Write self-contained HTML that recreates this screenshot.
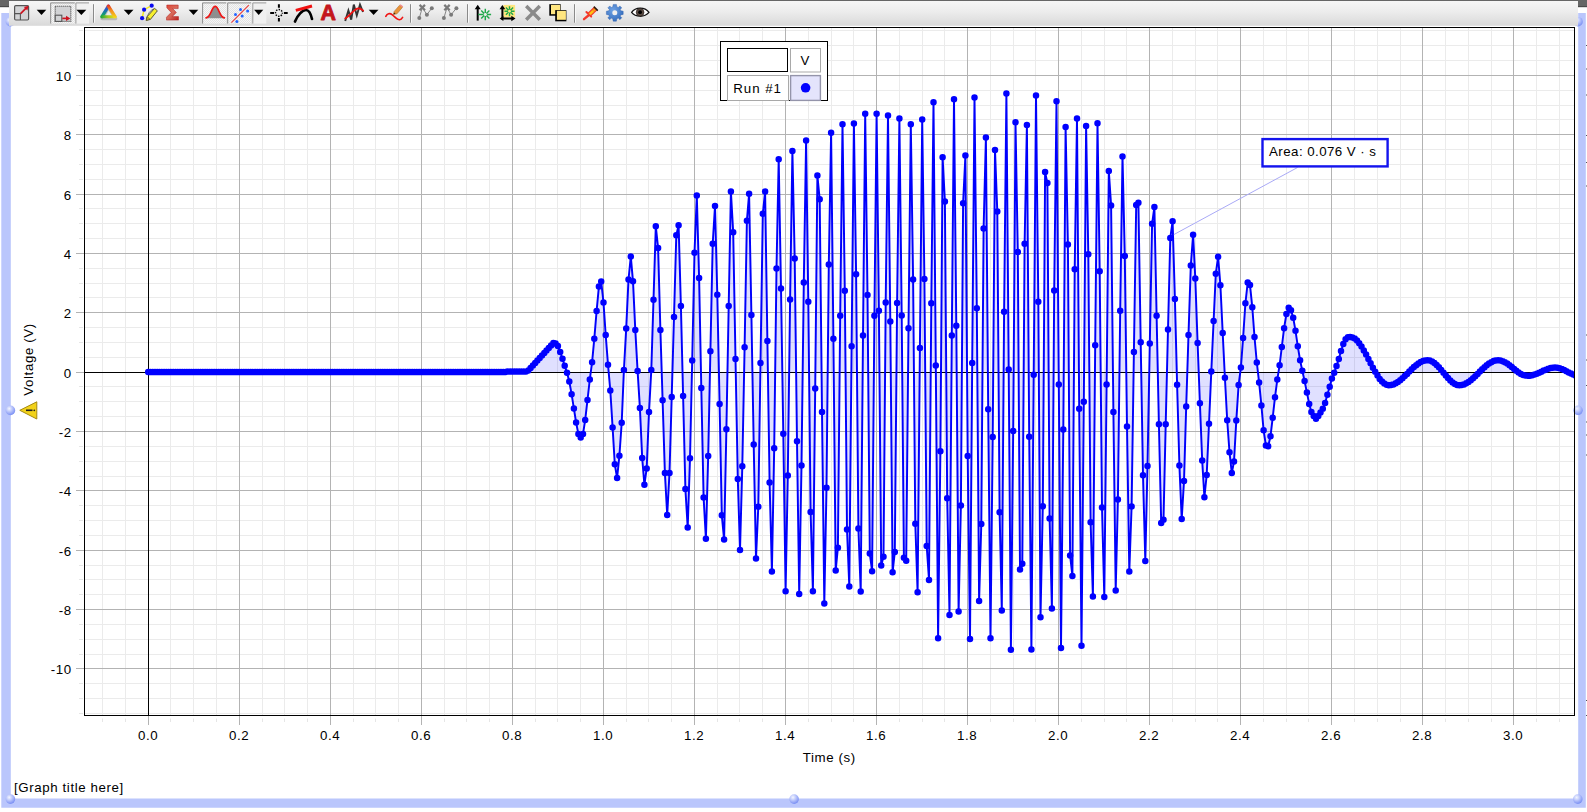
<!DOCTYPE html>
<html><head><meta charset="utf-8"><title>Graph</title>
<style>
html,body{margin:0;padding:0;background:#fff;}
body{width:1587px;height:812px;overflow:hidden;position:relative;font-family:"Liberation Sans",sans-serif;}
svg{position:absolute;left:0;top:0;display:block}
text{font-family:"Liberation Sans",sans-serif;font-size:13.3px;fill:#000;letter-spacing:0.6px}
</style></head><body>
<svg width="1587" height="812" viewBox="0 0 1587 812">
<defs>
<linearGradient id="tb" x1="0" y1="0" x2="0" y2="1"><stop offset="0" stop-color="#f6f6f6"/><stop offset="0.45" stop-color="#ececec"/><stop offset="1" stop-color="#d9d9d9"/></linearGradient>
<radialGradient id="sph" cx="0.38" cy="0.32" r="0.75"><stop offset="0" stop-color="#f4f6ff"/><stop offset="0.45" stop-color="#b7c3fb"/><stop offset="1" stop-color="#6f86f2"/></radialGradient>
<clipPath id="pc"><rect x="85" y="28" width="1489.5" height="687.5"/></clipPath>
</defs>
<rect width="1587" height="812" fill="#fff"/>

<rect x="0" y="0" width="1587" height="6.5" fill="#666"/><rect x="0" y="6" width="1587" height="1.2" fill="#4a4a4a"/>
<path d="M1.3 13H10.8V798.6H1578.2V13H1585.8V807.8H1.3Z" fill="#bac6fc"/>
<circle cx="10.4" cy="21.7" r="4.8" fill="url(#sph)"/>
<circle cx="1578" cy="21.7" r="4.8" fill="url(#sph)"/>
<circle cx="10.4" cy="410.4" r="4.8" fill="url(#sph)"/>
<circle cx="1578" cy="410.3" r="4.8" fill="url(#sph)"/>
<circle cx="10.4" cy="799.1" r="4.8" fill="url(#sph)"/>
<circle cx="794.1" cy="799.1" r="4.8" fill="url(#sph)"/>
<circle cx="1577.8" cy="799.1" r="4.8" fill="url(#sph)"/>
<path d="M1586 45.5H1587M1586 69H1587M1586 95H1587M1586 135.5H1587M1586 162.5H1587M1586 186H1587M1586 335H1587M1586 360H1587M1586 385.5H1587M1586 422H1587M1586 435H1587M1586 455H1587M1586 700.5H1587M1586 715.5H1587" stroke="#555" stroke-width="1"/>
<rect x="9" y="1" width="1569" height="24.8" fill="url(#tb)"/>
<defs>
<pattern id="dotp" width="2" height="2" patternUnits="userSpaceOnUse"><rect width="2" height="2" fill="#f6f6f6"/><rect width="1" height="1" fill="#e2e2e2"/><rect x="1" y="1" width="1" height="1" fill="#e2e2e2"/></pattern>
<linearGradient id="gsig" x1="0" y1="0" x2="1" y2="1"><stop offset="0" stop-color="#e0483a"/><stop offset="0.5" stop-color="#d86a5a"/><stop offset="1" stop-color="#b81c1c"/></linearGradient>
<linearGradient id="gtl" gradientUnits="userSpaceOnUse" x1="0" y1="5" x2="0" y2="18"><stop offset="0" stop-color="#7a3fa0"/><stop offset="0.35" stop-color="#1f62c4"/><stop offset="0.75" stop-color="#13a070"/><stop offset="1" stop-color="#1ea53a"/></linearGradient>
<linearGradient id="gtb" gradientUnits="userSpaceOnUse" x1="101" y1="0" x2="116" y2="0"><stop offset="0" stop-color="#1ea53a"/><stop offset="0.5" stop-color="#a8cc20"/><stop offset="1" stop-color="#f2e21a"/></linearGradient>
<linearGradient id="gtr" gradientUnits="userSpaceOnUse" x1="0" y1="5" x2="0" y2="18"><stop offset="0" stop-color="#e0312a"/><stop offset="0.4" stop-color="#f58a1c"/><stop offset="1" stop-color="#f5d81c"/></linearGradient>
<radialGradient id="ggear" cx="0.4" cy="0.35" r="0.8"><stop offset="0" stop-color="#6fa2e4"/><stop offset="1" stop-color="#2a64b6"/></radialGradient>
</defs>
<g id="toolbar">
<!-- icon1: scale to fit -->
<rect x="14.6" y="5.6" width="14" height="14.4" rx="1.2" fill="#d2d3d5" stroke="#555" stroke-width="1.2"/>
<path d="M14.6 13.6H20.4V20" fill="none" stroke="#555" stroke-width="1.1"/>
<path d="M20.6 13.6L26.6 7.6" stroke="#cc1320" stroke-width="1.7" fill="none"/>
<path d="M28.6 5.7L23.9 7L27.4 10.5Z" fill="#cc1320"/>
<path d="M36.7 9.8H46.3L41.5 15.1Z" fill="#000"/>
<!-- pressed button 2 -->
<rect x="50.2" y="2.4" width="24.6" height="21.2" fill="url(#dotp)"/>
<path d="M50.7 23.6V2.9H74.8" fill="none" stroke="#8c8c8c" stroke-width="1"/>
<rect x="75.4" y="2.4" width="13.6" height="21.2" fill="#f0f0f0"/>
<path d="M75.9 23.6V2.9H89" fill="none" stroke="#9a9a9a" stroke-width="1"/>
<rect x="55.2" y="6.2" width="15.6" height="15.2" fill="#d2d3d5" stroke="#555" stroke-width="1.1" stroke-dasharray="1.2 0.8"/>
<rect x="55.2" y="15.2" width="6.6" height="6.2" fill="#d2d3d5" stroke="#555" stroke-width="1.1"/>
<path d="M62.3 18.4H67" stroke="#cc1320" stroke-width="1.7"/>
<path d="M70.4 18.4L66 15.8V21Z" fill="#cc1320"/>
<path d="M76.4 9.8H86.3L81.35 15.1Z" fill="#000"/>
<path d="M93.5 4.2V22.7" stroke="#8a8a8a" stroke-width="1"/><path d="M94.5 4.2V22.7" stroke="#f8f8f8" stroke-width="1"/>
<!-- colour triangle -->
<g>
<path d="M102 18.6L108.6 7.4L115.6 18.6Z" fill="none" stroke="#888" stroke-opacity="0.45" stroke-width="3.4" stroke-linejoin="round"/>
<path d="M108.4 6.2L102 16.6" stroke="url(#gtl)" stroke-width="3.3" stroke-linecap="round" fill="none"/>
<path d="M102 16.7H115" stroke="url(#gtb)" stroke-width="3.1" stroke-linecap="round" fill="none"/>
<path d="M115 16.6L108.4 6.2" stroke="url(#gtr)" stroke-width="3.3" stroke-linecap="round" fill="none"/>
</g>
<path d="M123.7 9.8H133.5L128.6 15.1Z" fill="#000"/>
<!-- highlighter -->
<g>
<path d="M151.7 5.7L144.1 9.7L142.1 18.2" fill="none" stroke="#f2e61e" stroke-width="1.5"/>
<path d="M153.8 8.6Q148 11.5 146.5 19.6" fill="none" stroke="#777" stroke-width="1"/>
<path d="M154.6 8.4L157.4 10.8L150.4 19.4L146.2 20.4L147.2 16.6Z" fill="#f7f02e" stroke="#4a4a30" stroke-width="0.9" stroke-linejoin="round"/>
<path d="M147.2 16.8L150.2 19.3L146.2 20.4Z" fill="#cbb820" stroke="#4a4a30" stroke-width="0.6"/>
<circle cx="151.7" cy="5.7" r="2.1" fill="#0a0af0"/><circle cx="144.1" cy="9.7" r="2.1" fill="#0a0af0"/><circle cx="142.1" cy="18.2" r="2.1" fill="#0a0af0"/>
</g>
<!-- sigma -->
<path d="M166.8 5H178.2V8.6H172.6L176.4 12.4L172.3 16.6H178.5V20.1H166.5V17.2L171.2 12.4L166.8 7.8Z" fill="url(#gsig)" stroke="#b02020" stroke-width="0.5" stroke-linejoin="round"/>
<path d="M188.7 9.8H198.3L193.5 15.1Z" fill="#000"/>
<!-- pressed bell -->
<rect x="202.1" y="2.4" width="24.2" height="21.2" fill="url(#dotp)"/>
<path d="M202.6 23.6V2.9H226.3" fill="none" stroke="#8c8c8c" stroke-width="1"/>
<path d="M206 18.2C211 17.6 211.6 6.6 215.2 6.6C218.8 6.6 219.4 17.6 224.4 18.2Z" fill="#8e8e8e"/>
<path d="M206 17.9C211 17.3 211.6 6.4 215.2 6.4C218.8 6.4 219.4 17.3 224.4 17.9" fill="none" stroke="#f01414" stroke-width="1.6" stroke-linecap="round"/>
<!-- pressed linear fit -->
<rect x="227.2" y="2.4" width="24" height="21.2" fill="url(#dotp)"/>
<path d="M227.7 23.6V2.9H251.2" fill="none" stroke="#8c8c8c" stroke-width="1"/>
<rect x="252.3" y="2.4" width="14" height="21.2" fill="#f0f0f0"/>
<path d="M252.8 23.6V2.9H266.3" fill="none" stroke="#9a9a9a" stroke-width="1"/>
<g fill="#2464ff"><circle cx="240.5" cy="9.5" r="1.5"/><circle cx="247.6" cy="11" r="1.5"/><circle cx="235.5" cy="14.6" r="1.5"/><circle cx="242.2" cy="16" r="1.5"/><circle cx="236.9" cy="21.4" r="1.5"/></g>
<path d="M231.4 22.6L248.8 5.2" stroke="#f03a3a" stroke-width="1.1"/>
<path d="M254.1 9.8H263.3L258.7 15.1Z" fill="#000"/>
<!-- crosshair -->
<g stroke="#000" fill="none">
<path d="M278.9 4.2V7.8M278.9 18V21.6M270.2 12.9H274M283.9 12.9H287.7" stroke-width="2"/>
<circle cx="278.9" cy="12.9" r="3.4" stroke-width="1.5" stroke-dasharray="1.4 1.27" stroke-dashoffset="0.7"/>
</g>
<!-- tangent -->
<path d="M295 21.6C297.5 15 302.5 10 306 10C309 10 311 14.5 312 19" fill="none" stroke="#000" stroke-width="2.7" stroke-linecap="round"/>
<path d="M295.8 10.4L312 6" stroke="#f01010" stroke-width="3" stroke-linecap="butt"/>
<!-- A -->
<text x="328.3" y="19.9" text-anchor="middle" style="font-size:21.4px;font-weight:bold;fill:#c4161c;letter-spacing:0;stroke:#c4161c;stroke-width:0.9px;stroke-linejoin:round">A</text>
<!-- smoothing -->
<path d="M345.2 21L348.4 10.5L351.2 19.6L353.8 4.6L356.8 15.4L360 4.6L363 12" fill="none" stroke="#333" stroke-width="1.9" stroke-linejoin="miter"/>
<path d="M345.2 18.6C351 15 354 8.4 358.5 8.3C361 8.3 362 9.6 363.2 10.6" fill="none" stroke="#f01010" stroke-width="1.8" stroke-linecap="round"/>
<path d="M368.7 9.8H378.5L373.6 15.1Z" fill="#000"/>
<!-- pencil curve -->
<path d="M385.8 16.4C387.2 13.6 389.8 12.8 392 14.6C395 17 397.2 20 399.6 19.8C401.2 19.6 402 18.4 402.6 17.4" fill="none" stroke="#f01414" stroke-width="1.6" stroke-linecap="round"/>
<g>
<path d="M393.4 14.6L394.2 11.4L399.6 5.2L402.4 7.4L397 13.8Z" fill="#e8943a" stroke="#a8641c" stroke-width="0.5"/>
<path d="M399.6 5.2L400.6 4.2L403.2 6.4L402.4 7.4Z" fill="#f08888"/>
<path d="M393.4 14.6L394 12.4L395.6 13.8Z" fill="#3a2a1a"/>
</g>
<path d="M410.5 4.2V22.7" stroke="#8a8a8a" stroke-width="1"/><path d="M411.5 4.2V22.7" stroke="#f8f8f8" stroke-width="1"/>
<!-- grey x-points 1 -->
<g stroke="#7a7a7a" fill="#7a7a7a">
<path d="M419.3 18L422.3 7.6L426.9 14.7L431.8 8.2" fill="none" stroke-width="0.9"/>
<path d="M419.6 4.9L425 10.3M425 4.9L419.6 10.3" stroke-width="2.2" fill="none"/>
<circle cx="431.8" cy="8.2" r="2" stroke="none"/><circle cx="426.9" cy="14.7" r="2" stroke="none"/><circle cx="419.3" cy="18" r="2" stroke="none"/>
</g>
<g stroke="#7a7a7a" fill="#7a7a7a">
<path d="M443.9 18L447 7.6L451.1 14.7L456.4 8.2" fill="none" stroke-width="0.9"/>
<path d="M444.3 4.9L449.7 10.3M449.7 4.9L444.3 10.3" stroke-width="2.2" fill="none"/>
<circle cx="456.4" cy="8.2" r="2" stroke="none"/><circle cx="451.1" cy="14.7" r="2" stroke="none"/><circle cx="443.9" cy="18" r="2" stroke="none"/>
</g>
<path d="M467.5 4.2V22.7" stroke="#8a8a8a" stroke-width="1"/><path d="M468.5 4.2V22.7" stroke="#f8f8f8" stroke-width="1"/>
<!-- arrow up + star -->
<path d="M477.7 20.6V8" stroke="#000" stroke-width="2"/>
<path d="M477.7 4.8L474.7 9.2H480.7Z" fill="#000"/>
<g stroke="#20a84a" stroke-width="1.45" fill="none" transform="translate(485.3 14.5)">
<path d="M-7 0H-1.6M1.6 0H5.8M0 -5.8V-1.6M0 1.6V5.8M-4.1 -4.1L-1.1 -1.1M1.1 1.1L4.1 4.1M-4.1 4.1L-1.1 1.1M1.1 -1.1L4.1 -4.1"/>
</g>
<!-- axes + star -->
<rect x="503.4" y="4.9" width="11.7" height="12.6" fill="#ffe680"/>
<path d="M502.4 8.5V18.5H512" stroke="#000" stroke-width="2" fill="none"/>
<path d="M502.4 5L499.5 9.2H505.3Z" fill="#000"/><path d="M515.5 18.5L511.3 15.7V21.3Z" fill="#000"/><path d="M499.6 18.5L503.4 16V21Z" fill="#000"/>
<g stroke="#20a84a" stroke-width="1.45" fill="none" transform="translate(509.5 11.2)">
<path d="M-5 0H-1.4M1.4 0H5M0 -5V-1.4M0 1.4V5M-3.6 -3.6L-1 -1M1 1L3.6 3.6M-3.6 3.6L-1 1M1 -1L3.6 -3.6"/>
</g>
<!-- grey X -->
<path d="M526.2 6L539.8 19.8M539.8 6L526.2 19.8" stroke="#8a8a8a" stroke-width="3.4" fill="none"/>
<!-- yellow squares -->
<rect x="549.3" y="4.2" width="11.4" height="11.5" fill="#000"/><rect x="551" y="4.9" width="9.2" height="9.3" fill="#ffe680"/>
<rect x="555.2" y="10.1" width="11.2" height="11.2" fill="#000"/><rect x="556.9" y="10.8" width="9" height="9" fill="#ffe680"/>
<path d="M574.5 4.2V22.7" stroke="#8a8a8a" stroke-width="1"/><path d="M575.5 4.2V22.7" stroke="#f8f8f8" stroke-width="1"/>
<!-- pin -->
<g>
<path d="M589 15L584 19.2" stroke="#f2382c" stroke-width="2.3" stroke-linecap="round"/>
<path d="M586.4 12L591.2 16.6" stroke="#f2382c" stroke-width="2" stroke-linecap="round"/>
<path d="M589.4 14.6L595.4 8.8" stroke="#f23a2c" stroke-width="4.8"/>
<path d="M589.6 14.4L595.4 8.8" stroke="#fb9a14" stroke-width="2.6"/>
<path d="M590 14L593 11.2" stroke="#fdc414" stroke-width="2"/>
<path d="M593.8 6.6L597.8 10.6" stroke="#2a1a12" stroke-width="1.5" stroke-linecap="butt"/>
</g>
<!-- gear -->
<g transform="translate(614.8 12.8)">
<path id="gearp" fill="url(#ggear)" stroke="#2a5ca8" stroke-width="0.4" d="M-1.6 -8.4H1.6L2.1 -5.9L3.6 -5.3L5 -6.9L7 -4.9L5.4 -3.5L6 -2.1L8.4 -1.6V1.6L6 2.1L5.4 3.5L7 4.9L5 6.9L3.6 5.3L2.1 5.9L1.6 8.4H-1.6L-2.1 5.9L-3.6 5.3L-5 6.9L-7 4.9L-5.4 3.5L-6 2.1L-8.4 1.6V-1.6L-6 -2.1L-5.4 -3.5L-7 -4.9L-5 -6.9L-3.6 -5.3L-2.1 -5.9Z"/>
<circle r="2.5" fill="#f0f0f0"/>
</g>
<!-- eye -->
<g>
<path d="M631.6 12.4C635.5 7 644.5 6.6 649 12.4C644.5 17.6 635.5 17.4 631.6 12.4Z" fill="#fff" stroke="#111" stroke-width="1.3" stroke-linejoin="round"/>
<circle cx="640.1" cy="12.3" r="3.9" fill="#5a4a42" stroke="#221a16" stroke-width="0.6"/><circle cx="640.1" cy="12.2" r="1.9" fill="#000"/>
</g>
</g>

<path d="M102.5 27.5V715.5M125.5 27.5V715.5M170.5 27.5V715.5M193.5 27.5V715.5M216.5 27.5V715.5M262.5 27.5V715.5M284.5 27.5V715.5M307.5 27.5V715.5M353.5 27.5V715.5M375.5 27.5V715.5M398.5 27.5V715.5M444.5 27.5V715.5M466.5 27.5V715.5M489.5 27.5V715.5M535.5 27.5V715.5M557.5 27.5V715.5M580.5 27.5V715.5M626.5 27.5V715.5M648.5 27.5V715.5M671.5 27.5V715.5M717.5 27.5V715.5M739.5 27.5V715.5M762.5 27.5V715.5M808.5 27.5V715.5M831.5 27.5V715.5M853.5 27.5V715.5M899.5 27.5V715.5M922.5 27.5V715.5M944.5 27.5V715.5M990.5 27.5V715.5M1013.5 27.5V715.5M1035.5 27.5V715.5M1081.5 27.5V715.5M1104.5 27.5V715.5M1126.5 27.5V715.5M1172.5 27.5V715.5M1195.5 27.5V715.5M1217.5 27.5V715.5M1263.5 27.5V715.5M1286.5 27.5V715.5M1308.5 27.5V715.5M1354.5 27.5V715.5M1377.5 27.5V715.5M1400.5 27.5V715.5M1445.5 27.5V715.5M1468.5 27.5V715.5M1491.5 27.5V715.5M1536.5 27.5V715.5M1559.5 27.5V715.5M84.5 713.5H1574.5M84.5 698.5H1574.5M84.5 683.5H1574.5M84.5 654.5H1574.5M84.5 639.5H1574.5M84.5 624.5H1574.5M84.5 594.5H1574.5M84.5 579.5H1574.5M84.5 565.5H1574.5M84.5 535.5H1574.5M84.5 520.5H1574.5M84.5 505.5H1574.5M84.5 476.5H1574.5M84.5 461.5H1574.5M84.5 446.5H1574.5M84.5 416.5H1574.5M84.5 401.5H1574.5M84.5 386.5H1574.5M84.5 357.5H1574.5M84.5 342.5H1574.5M84.5 327.5H1574.5M84.5 297.5H1574.5M84.5 283.5H1574.5M84.5 268.5H1574.5M84.5 238.5H1574.5M84.5 223.5H1574.5M84.5 208.5H1574.5M84.5 179.5H1574.5M84.5 164.5H1574.5M84.5 149.5H1574.5M84.5 119.5H1574.5M84.5 105.5H1574.5M84.5 90.5H1574.5M84.5 60.5H1574.5M84.5 45.5H1574.5M84.5 30.5H1574.5" stroke="#ebebeb" stroke-width="1" fill="none"/>
<path d="M102.5 718.5V722M125.5 718.5V722M170.5 718.5V722M193.5 718.5V722M216.5 718.5V722M262.5 718.5V722M284.5 718.5V722M307.5 718.5V722M353.5 718.5V722M375.5 718.5V722M398.5 718.5V722M444.5 718.5V722M466.5 718.5V722M489.5 718.5V722M535.5 718.5V722M557.5 718.5V722M580.5 718.5V722M626.5 718.5V722M648.5 718.5V722M671.5 718.5V722M717.5 718.5V722M739.5 718.5V722M762.5 718.5V722M808.5 718.5V722M831.5 718.5V722M853.5 718.5V722M899.5 718.5V722M922.5 718.5V722M944.5 718.5V722M990.5 718.5V722M1013.5 718.5V722M1035.5 718.5V722M1081.5 718.5V722M1104.5 718.5V722M1126.5 718.5V722M1172.5 718.5V722M1195.5 718.5V722M1217.5 718.5V722M1263.5 718.5V722M1286.5 718.5V722M1308.5 718.5V722M1354.5 718.5V722M1377.5 718.5V722M1400.5 718.5V722M1445.5 718.5V722M1468.5 718.5V722M1491.5 718.5V722M1536.5 718.5V722M1559.5 718.5V722M79 713.5H83M79 698.5H83M79 683.5H83M79 654.5H83M79 639.5H83M79 624.5H83M79 594.5H83M79 579.5H83M79 565.5H83M79 535.5H83M79 520.5H83M79 505.5H83M79 476.5H83M79 461.5H83M79 446.5H83M79 416.5H83M79 401.5H83M79 386.5H83M79 357.5H83M79 342.5H83M79 327.5H83M79 297.5H83M79 283.5H83M79 268.5H83M79 238.5H83M79 223.5H83M79 208.5H83M79 179.5H83M79 164.5H83M79 149.5H83M79 119.5H83M79 105.5H83M79 90.5H83M79 60.5H83M79 45.5H83M79 30.5H83" stroke="#e6e6e6" stroke-width="1" fill="none"/>
<path d="M239.5 27.5V725M330.5 27.5V725M421.5 27.5V725M512.5 27.5V725M603.5 27.5V725M694.5 27.5V725M785.5 27.5V725M876.5 27.5V725M967.5 27.5V725M1058.5 27.5V725M1149.5 27.5V725M1240.5 27.5V725M1331.5 27.5V725M1422.5 27.5V725M1513.5 27.5V725M76 668.5H1574.5M76 609.5H1574.5M76 550.5H1574.5M76 490.5H1574.5M76 431.5H1574.5M76 312.5H1574.5M76 253.5H1574.5M76 194.5H1574.5M76 134.5H1574.5M76 75.5H1574.5" stroke="#b3b3b3" stroke-width="1" fill="none"/>
<path d="M148.5 715.5V725M76 372.5H84" stroke="#b3b3b3" stroke-width="1" fill="none"/>
<g clip-path="url(#pc)"><path d="M148.2 372.5L148.2 372.1L150.4 372.1L152.7 372.1L155.0 372.1L157.3 372.1L159.5 372.1L161.8 372.1L164.1 372.1L166.4 372.1L168.6 372.1L170.9 372.1L173.2 372.1L175.5 372.1L177.7 372.1L180.0 372.1L182.3 372.1L184.6 372.1L186.9 372.1L189.1 372.1L191.4 372.1L193.7 372.1L196.0 372.1L198.2 372.1L200.5 372.1L202.8 372.1L205.1 372.1L207.3 372.1L209.6 372.1L211.9 372.1L214.2 372.1L216.4 372.1L218.7 372.1L221.0 372.1L223.3 372.1L225.6 372.1L227.8 372.1L230.1 372.1L232.4 372.1L234.7 372.1L236.9 372.1L239.2 372.1L241.5 372.1L243.8 372.1L246.0 372.1L248.3 372.1L250.6 372.1L252.9 372.1L255.1 372.1L257.4 372.1L259.7 372.1L262.0 372.1L264.3 372.1L266.5 372.1L268.8 372.1L271.1 372.1L273.4 372.1L275.6 372.1L277.9 372.1L280.2 372.1L282.5 372.1L284.7 372.1L287.0 372.1L289.3 372.1L291.6 372.1L293.8 372.1L296.1 372.1L298.4 372.1L300.7 372.1L303.0 372.1L305.2 372.1L307.5 372.1L309.8 372.1L312.1 372.1L314.3 372.1L316.6 372.1L318.9 372.1L321.2 372.1L323.4 372.1L325.7 372.1L328.0 372.1L330.3 372.1L332.5 372.1L334.8 372.1L337.1 372.1L339.4 372.1L341.7 372.1L343.9 372.1L346.2 372.1L348.5 372.1L350.8 372.1L353.0 372.1L355.3 372.1L357.6 372.1L359.9 372.1L362.1 372.1L364.4 372.1L366.7 372.1L369.0 372.1L371.2 372.1L373.5 372.1L375.8 372.1L378.1 372.1L380.4 372.1L382.6 372.1L384.9 372.1L387.2 372.1L389.5 372.1L391.7 372.1L394.0 372.1L396.3 372.1L398.6 372.1L400.8 372.1L403.1 372.1L405.4 372.1L407.7 372.1L409.9 372.1L412.2 372.1L414.5 372.1L416.8 372.1L419.1 372.1L421.3 372.1L423.6 372.1L425.9 372.1L428.2 372.1L430.4 372.1L432.7 372.1L435.0 372.1L437.3 372.1L439.5 372.1L441.8 372.1L444.1 372.1L446.4 372.1L448.6 372.1L450.9 372.1L453.2 372.1L455.5 372.1L457.8 372.1L460.0 372.1L462.3 372.1L464.6 372.1L466.9 372.1L469.1 372.1L471.4 372.1L473.7 372.1L476.0 372.1L478.2 372.1L480.5 372.1L482.8 372.1L485.1 372.1L487.3 372.1L489.6 372.1L491.9 372.1L494.2 372.1L496.5 372.1L498.7 372.1L501.0 372.1L503.3 372.1L505.6 372.1L507.8 371.6L510.1 371.6L512.4 371.6L514.7 371.6L516.9 371.6L519.2 371.6L521.5 371.6L523.8 371.6L526.0 371.6L528.3 370.4L530.6 367.9L532.9 365.4L535.2 362.9L537.4 360.5L539.7 358.0L542.0 355.5L544.3 353.0L546.5 350.5L548.8 348.1L551.1 345.6L553.4 343.1L555.6 343.6L557.9 346.1L560.2 352.0L562.5 358.7L564.7 365.8L567.0 372.7L569.3 381.5L571.6 394.2L573.9 408.6L576.1 422.5L578.4 434.1L580.7 437.4L583.0 434.1L585.2 419.9L587.5 399.9L589.8 379.5L592.1 362.2L594.3 338.7L596.6 311.0L598.9 286.6L601.2 281.5L603.5 302.6L605.7 335.0L608.0 364.7L610.3 390.4L612.6 427.4L614.8 464.3L617.1 478.0L619.4 455.8L621.7 422.8L623.9 370.0L626.2 328.6L628.5 279.5L630.8 256.6L633.0 281.3L635.3 330.1L637.6 371.1L639.9 407.9L642.2 458.1L644.4 484.7L646.7 468.4L649.0 412.1L651.3 370.0L653.5 299.8L655.8 226.3L658.1 248.1L660.4 330.1L662.6 400.3L664.9 473.1L667.2 515.1L669.5 473.0L671.7 397.0L674.0 317.0L676.3 235.3L678.6 225.2L680.9 306.0L683.1 396.1L685.4 489.1L687.7 527.6L690.0 458.3L692.2 360.4L694.5 252.7L696.8 195.6L699.1 277.9L701.3 388.0L703.6 497.4L705.9 538.7L708.2 456.1L710.4 351.2L712.7 243.8L715.0 206.0L717.3 294.7L719.6 404.1L721.8 515.3L724.1 539.6L726.4 429.2L728.7 306.0L730.9 191.6L733.2 232.3L735.5 358.9L737.8 478.9L740.0 550.1L742.3 466.2L744.6 347.3L746.9 220.7L749.1 193.8L751.4 315.1L753.7 444.6L756.0 558.5L758.3 506.7L760.5 363.0L762.8 213.8L765.1 191.5L767.4 340.9L769.6 482.6L771.9 571.4L774.2 448.2L776.5 268.4L778.7 159.2L781.0 288.6L783.3 433.8L785.6 591.3L787.8 475.6L790.1 299.4L792.4 150.9L794.7 258.5L797.0 441.3L799.2 594.1L801.5 465.5L803.8 282.5L806.1 140.5L808.3 301.7L810.6 512.0L812.9 591.3L815.2 388.5L817.4 175.5L819.7 199.3L822.0 411.9L824.3 603.6L826.5 487.8L828.8 264.5L831.1 132.7L833.4 338.8L835.7 570.5L837.9 547.7L840.2 315.8L842.5 124.2L844.8 290.8L847.0 529.5L849.3 586.6L851.6 346.2L853.9 123.5L856.1 274.3L858.4 528.4L860.7 591.5L863.0 335.6L865.2 113.8L867.5 295.1L869.8 553.5L872.1 571.2L874.4 315.8L876.6 113.8L878.9 310.8L881.2 565.6L883.5 556.8L885.7 302.4L888.0 115.5L890.3 321.5L892.6 572.2L894.8 552.1L897.1 303.0L899.4 118.6L901.7 315.4L903.9 557.7L906.2 560.7L908.5 328.2L910.8 124.2L913.1 279.6L915.3 523.7L917.6 592.2L919.9 348.1L922.2 119.5L924.4 278.9L926.7 545.9L929.0 579.9L931.3 303.3L933.5 102.3L935.8 365.6L938.1 638.2L940.4 451.2L942.6 157.3L944.9 201.4L947.2 498.3L949.5 615.1L951.8 335.6L954.0 99.3L956.3 325.8L958.6 611.5L960.9 505.5L963.1 203.2L965.4 155.6L967.7 456.1L970.0 638.9L972.2 362.9L974.5 97.6L976.8 308.2L979.1 600.9L981.3 523.9L983.6 228.6L985.9 137.5L988.2 409.2L990.5 638.2L992.7 437.1L995.0 149.9L997.3 211.6L999.6 512.2L1001.8 610.4L1004.1 311.8L1006.4 93.6L1008.7 369.5L1010.9 649.7L1013.2 431.0L1015.5 122.2L1017.8 251.9L1020.0 569.5L1022.3 563.7L1024.6 243.7L1026.9 125.0L1029.2 436.8L1031.4 649.5L1033.7 374.8L1036.0 95.5L1038.3 301.8L1040.5 617.3L1042.8 506.3L1045.1 172.1L1047.4 183.1L1049.6 518.6L1051.9 608.6L1054.2 290.4L1056.5 101.3L1058.8 384.6L1061.0 648.1L1063.3 429.6L1065.6 127.1L1067.9 244.5L1070.1 555.5L1072.4 576.0L1074.7 269.3L1077.0 118.6L1079.2 408.8L1081.5 645.7L1083.8 401.7L1086.1 126.1L1088.3 254.2L1090.6 522.2L1092.9 596.6L1095.2 345.3L1097.5 123.3L1099.7 271.3L1102.0 507.5L1104.3 596.9L1106.6 384.6L1108.8 170.9L1111.1 205.4L1113.4 412.1L1115.7 590.4L1117.9 499.5L1120.2 310.8L1122.5 156.6L1124.8 256.1L1127.0 426.5L1129.3 571.4L1131.6 506.4L1133.9 352.1L1136.2 204.9L1138.4 202.7L1140.7 342.2L1143.0 475.3L1145.3 560.9L1147.5 465.9L1149.8 343.4L1152.1 223.8L1154.4 207.0L1156.6 315.8L1158.9 424.3L1161.2 522.9L1163.5 519.8L1165.7 424.3L1168.0 329.5L1170.3 237.9L1172.6 221.3L1174.9 298.9L1177.1 384.7L1179.4 465.4L1181.7 519.1L1184.0 481.1L1186.2 406.5L1188.5 334.9L1190.8 265.6L1193.1 234.8L1195.3 278.5L1197.6 343.0L1199.9 403.3L1202.2 460.6L1204.4 497.2L1206.7 475.0L1209.0 423.8L1211.3 371.5L1213.6 321.0L1215.8 273.7L1218.1 256.8L1220.4 285.2L1222.7 333.0L1224.9 377.7L1227.2 420.3L1229.5 452.2L1231.8 473.1L1234.0 461.5L1236.3 420.6L1238.6 385.0L1240.9 367.4L1243.1 337.9L1245.4 303.3L1247.7 282.5L1250.0 285.1L1252.3 307.3L1254.5 337.0L1256.8 362.5L1259.1 382.4L1261.4 405.4L1263.6 430.3L1265.9 445.5L1268.2 446.3L1270.5 436.2L1272.7 417.7L1275.0 397.2L1277.3 379.6L1279.6 365.2L1281.8 347.0L1284.1 328.2L1286.4 314.0L1288.7 307.8L1291.0 310.2L1293.2 317.7L1295.5 330.8L1297.8 346.3L1300.1 360.3L1302.3 370.7L1304.6 381.0L1306.9 392.6L1309.2 403.9L1311.4 412.1L1313.7 416.1L1316.0 418.7L1318.3 416.1L1320.5 412.5L1322.8 408.8L1325.1 402.9L1327.4 394.8L1329.7 386.7L1331.9 378.6L1334.2 372.7L1336.5 366.0L1338.8 358.9L1341.0 351.0L1343.3 344.1L1345.6 339.2L1347.9 337.2L1350.1 337.0L1352.4 337.4L1354.7 338.6L1357.0 340.6L1359.2 343.3L1361.5 346.6L1363.8 350.4L1366.1 354.5L1368.4 358.9L1370.6 363.3L1372.9 367.7L1375.2 371.8L1377.5 375.6L1379.7 378.9L1382.0 381.6L1384.3 383.6L1386.6 384.8L1388.8 385.2L1391.1 385.0L1393.4 384.4L1395.7 383.3L1397.9 381.9L1400.2 380.2L1402.5 378.3L1404.8 376.1L1407.1 373.9L1409.3 371.5L1411.6 369.3L1413.9 367.1L1416.2 365.2L1418.4 363.5L1420.7 362.1L1423.0 361.0L1425.3 360.4L1427.5 360.2L1429.8 360.5L1432.1 361.4L1434.4 362.9L1436.6 364.9L1438.9 367.3L1441.2 369.9L1443.5 372.7L1445.8 375.5L1448.0 378.1L1450.3 380.5L1452.6 382.5L1454.9 384.0L1457.1 384.9L1459.4 385.2L1461.7 385.0L1464.0 384.4L1466.2 383.3L1468.5 382.0L1470.8 380.3L1473.1 378.3L1475.3 376.2L1477.6 373.9L1479.9 371.6L1482.2 369.3L1484.5 367.2L1486.7 365.2L1489.0 363.5L1491.3 362.2L1493.6 361.1L1495.8 360.5L1498.1 360.3L1500.4 360.5L1502.7 361.2L1504.9 362.2L1507.2 363.6L1509.5 365.3L1511.8 367.1L1514.1 369.0L1516.3 370.8L1518.6 372.5L1520.9 373.9L1523.2 374.9L1525.4 375.6L1527.7 375.8L1530.0 375.7L1532.3 375.3L1534.5 374.6L1536.8 373.8L1539.1 372.8L1541.4 371.7L1543.6 370.6L1545.9 369.7L1548.2 368.8L1550.5 368.1L1552.8 367.7L1555.0 367.6L1557.3 367.8L1559.6 368.3L1561.9 369.1L1564.1 370.1L1566.4 371.2L1568.7 372.4L1571.0 373.6L1573.2 374.6L1575.5 375.4L1575.5 372.5Z" fill="#0000ff" fill-opacity="0.12" stroke="none"/>
<path d="M148.5 27.5V715.5M84.5 372.5H1574.5" stroke="#000" stroke-width="1" fill="none"/>
<path d="M148.2 372.1L150.4 372.1L152.7 372.1L155.0 372.1L157.3 372.1L159.5 372.1L161.8 372.1L164.1 372.1L166.4 372.1L168.6 372.1L170.9 372.1L173.2 372.1L175.5 372.1L177.7 372.1L180.0 372.1L182.3 372.1L184.6 372.1L186.9 372.1L189.1 372.1L191.4 372.1L193.7 372.1L196.0 372.1L198.2 372.1L200.5 372.1L202.8 372.1L205.1 372.1L207.3 372.1L209.6 372.1L211.9 372.1L214.2 372.1L216.4 372.1L218.7 372.1L221.0 372.1L223.3 372.1L225.6 372.1L227.8 372.1L230.1 372.1L232.4 372.1L234.7 372.1L236.9 372.1L239.2 372.1L241.5 372.1L243.8 372.1L246.0 372.1L248.3 372.1L250.6 372.1L252.9 372.1L255.1 372.1L257.4 372.1L259.7 372.1L262.0 372.1L264.3 372.1L266.5 372.1L268.8 372.1L271.1 372.1L273.4 372.1L275.6 372.1L277.9 372.1L280.2 372.1L282.5 372.1L284.7 372.1L287.0 372.1L289.3 372.1L291.6 372.1L293.8 372.1L296.1 372.1L298.4 372.1L300.7 372.1L303.0 372.1L305.2 372.1L307.5 372.1L309.8 372.1L312.1 372.1L314.3 372.1L316.6 372.1L318.9 372.1L321.2 372.1L323.4 372.1L325.7 372.1L328.0 372.1L330.3 372.1L332.5 372.1L334.8 372.1L337.1 372.1L339.4 372.1L341.7 372.1L343.9 372.1L346.2 372.1L348.5 372.1L350.8 372.1L353.0 372.1L355.3 372.1L357.6 372.1L359.9 372.1L362.1 372.1L364.4 372.1L366.7 372.1L369.0 372.1L371.2 372.1L373.5 372.1L375.8 372.1L378.1 372.1L380.4 372.1L382.6 372.1L384.9 372.1L387.2 372.1L389.5 372.1L391.7 372.1L394.0 372.1L396.3 372.1L398.6 372.1L400.8 372.1L403.1 372.1L405.4 372.1L407.7 372.1L409.9 372.1L412.2 372.1L414.5 372.1L416.8 372.1L419.1 372.1L421.3 372.1L423.6 372.1L425.9 372.1L428.2 372.1L430.4 372.1L432.7 372.1L435.0 372.1L437.3 372.1L439.5 372.1L441.8 372.1L444.1 372.1L446.4 372.1L448.6 372.1L450.9 372.1L453.2 372.1L455.5 372.1L457.8 372.1L460.0 372.1L462.3 372.1L464.6 372.1L466.9 372.1L469.1 372.1L471.4 372.1L473.7 372.1L476.0 372.1L478.2 372.1L480.5 372.1L482.8 372.1L485.1 372.1L487.3 372.1L489.6 372.1L491.9 372.1L494.2 372.1L496.5 372.1L498.7 372.1L501.0 372.1L503.3 372.1L505.6 372.1L507.8 371.6L510.1 371.6L512.4 371.6L514.7 371.6L516.9 371.6L519.2 371.6L521.5 371.6L523.8 371.6L526.0 371.6L528.3 370.4L530.6 367.9L532.9 365.4L535.2 362.9L537.4 360.5L539.7 358.0L542.0 355.5L544.3 353.0L546.5 350.5L548.8 348.1L551.1 345.6L553.4 343.1L555.6 343.6L557.9 346.1L560.2 352.0L562.5 358.7L564.7 365.8L567.0 372.7L569.3 381.5L571.6 394.2L573.9 408.6L576.1 422.5L578.4 434.1L580.7 437.4L583.0 434.1L585.2 419.9L587.5 399.9L589.8 379.5L592.1 362.2L594.3 338.7L596.6 311.0L598.9 286.6L601.2 281.5L603.5 302.6L605.7 335.0L608.0 364.7L610.3 390.4L612.6 427.4L614.8 464.3L617.1 478.0L619.4 455.8L621.7 422.8L623.9 370.0L626.2 328.6L628.5 279.5L630.8 256.6L633.0 281.3L635.3 330.1L637.6 371.1L639.9 407.9L642.2 458.1L644.4 484.7L646.7 468.4L649.0 412.1L651.3 370.0L653.5 299.8L655.8 226.3L658.1 248.1L660.4 330.1L662.6 400.3L664.9 473.1L667.2 515.1L669.5 473.0L671.7 397.0L674.0 317.0L676.3 235.3L678.6 225.2L680.9 306.0L683.1 396.1L685.4 489.1L687.7 527.6L690.0 458.3L692.2 360.4L694.5 252.7L696.8 195.6L699.1 277.9L701.3 388.0L703.6 497.4L705.9 538.7L708.2 456.1L710.4 351.2L712.7 243.8L715.0 206.0L717.3 294.7L719.6 404.1L721.8 515.3L724.1 539.6L726.4 429.2L728.7 306.0L730.9 191.6L733.2 232.3L735.5 358.9L737.8 478.9L740.0 550.1L742.3 466.2L744.6 347.3L746.9 220.7L749.1 193.8L751.4 315.1L753.7 444.6L756.0 558.5L758.3 506.7L760.5 363.0L762.8 213.8L765.1 191.5L767.4 340.9L769.6 482.6L771.9 571.4L774.2 448.2L776.5 268.4L778.7 159.2L781.0 288.6L783.3 433.8L785.6 591.3L787.8 475.6L790.1 299.4L792.4 150.9L794.7 258.5L797.0 441.3L799.2 594.1L801.5 465.5L803.8 282.5L806.1 140.5L808.3 301.7L810.6 512.0L812.9 591.3L815.2 388.5L817.4 175.5L819.7 199.3L822.0 411.9L824.3 603.6L826.5 487.8L828.8 264.5L831.1 132.7L833.4 338.8L835.7 570.5L837.9 547.7L840.2 315.8L842.5 124.2L844.8 290.8L847.0 529.5L849.3 586.6L851.6 346.2L853.9 123.5L856.1 274.3L858.4 528.4L860.7 591.5L863.0 335.6L865.2 113.8L867.5 295.1L869.8 553.5L872.1 571.2L874.4 315.8L876.6 113.8L878.9 310.8L881.2 565.6L883.5 556.8L885.7 302.4L888.0 115.5L890.3 321.5L892.6 572.2L894.8 552.1L897.1 303.0L899.4 118.6L901.7 315.4L903.9 557.7L906.2 560.7L908.5 328.2L910.8 124.2L913.1 279.6L915.3 523.7L917.6 592.2L919.9 348.1L922.2 119.5L924.4 278.9L926.7 545.9L929.0 579.9L931.3 303.3L933.5 102.3L935.8 365.6L938.1 638.2L940.4 451.2L942.6 157.3L944.9 201.4L947.2 498.3L949.5 615.1L951.8 335.6L954.0 99.3L956.3 325.8L958.6 611.5L960.9 505.5L963.1 203.2L965.4 155.6L967.7 456.1L970.0 638.9L972.2 362.9L974.5 97.6L976.8 308.2L979.1 600.9L981.3 523.9L983.6 228.6L985.9 137.5L988.2 409.2L990.5 638.2L992.7 437.1L995.0 149.9L997.3 211.6L999.6 512.2L1001.8 610.4L1004.1 311.8L1006.4 93.6L1008.7 369.5L1010.9 649.7L1013.2 431.0L1015.5 122.2L1017.8 251.9L1020.0 569.5L1022.3 563.7L1024.6 243.7L1026.9 125.0L1029.2 436.8L1031.4 649.5L1033.7 374.8L1036.0 95.5L1038.3 301.8L1040.5 617.3L1042.8 506.3L1045.1 172.1L1047.4 183.1L1049.6 518.6L1051.9 608.6L1054.2 290.4L1056.5 101.3L1058.8 384.6L1061.0 648.1L1063.3 429.6L1065.6 127.1L1067.9 244.5L1070.1 555.5L1072.4 576.0L1074.7 269.3L1077.0 118.6L1079.2 408.8L1081.5 645.7L1083.8 401.7L1086.1 126.1L1088.3 254.2L1090.6 522.2L1092.9 596.6L1095.2 345.3L1097.5 123.3L1099.7 271.3L1102.0 507.5L1104.3 596.9L1106.6 384.6L1108.8 170.9L1111.1 205.4L1113.4 412.1L1115.7 590.4L1117.9 499.5L1120.2 310.8L1122.5 156.6L1124.8 256.1L1127.0 426.5L1129.3 571.4L1131.6 506.4L1133.9 352.1L1136.2 204.9L1138.4 202.7L1140.7 342.2L1143.0 475.3L1145.3 560.9L1147.5 465.9L1149.8 343.4L1152.1 223.8L1154.4 207.0L1156.6 315.8L1158.9 424.3L1161.2 522.9L1163.5 519.8L1165.7 424.3L1168.0 329.5L1170.3 237.9L1172.6 221.3L1174.9 298.9L1177.1 384.7L1179.4 465.4L1181.7 519.1L1184.0 481.1L1186.2 406.5L1188.5 334.9L1190.8 265.6L1193.1 234.8L1195.3 278.5L1197.6 343.0L1199.9 403.3L1202.2 460.6L1204.4 497.2L1206.7 475.0L1209.0 423.8L1211.3 371.5L1213.6 321.0L1215.8 273.7L1218.1 256.8L1220.4 285.2L1222.7 333.0L1224.9 377.7L1227.2 420.3L1229.5 452.2L1231.8 473.1L1234.0 461.5L1236.3 420.6L1238.6 385.0L1240.9 367.4L1243.1 337.9L1245.4 303.3L1247.7 282.5L1250.0 285.1L1252.3 307.3L1254.5 337.0L1256.8 362.5L1259.1 382.4L1261.4 405.4L1263.6 430.3L1265.9 445.5L1268.2 446.3L1270.5 436.2L1272.7 417.7L1275.0 397.2L1277.3 379.6L1279.6 365.2L1281.8 347.0L1284.1 328.2L1286.4 314.0L1288.7 307.8L1291.0 310.2L1293.2 317.7L1295.5 330.8L1297.8 346.3L1300.1 360.3L1302.3 370.7L1304.6 381.0L1306.9 392.6L1309.2 403.9L1311.4 412.1L1313.7 416.1L1316.0 418.7L1318.3 416.1L1320.5 412.5L1322.8 408.8L1325.1 402.9L1327.4 394.8L1329.7 386.7L1331.9 378.6L1334.2 372.7L1336.5 366.0L1338.8 358.9L1341.0 351.0L1343.3 344.1L1345.6 339.2L1347.9 337.2L1350.1 337.0L1352.4 337.4L1354.7 338.6L1357.0 340.6L1359.2 343.3L1361.5 346.6L1363.8 350.4L1366.1 354.5L1368.4 358.9L1370.6 363.3L1372.9 367.7L1375.2 371.8L1377.5 375.6L1379.7 378.9L1382.0 381.6L1384.3 383.6L1386.6 384.8L1388.8 385.2L1391.1 385.0L1393.4 384.4L1395.7 383.3L1397.9 381.9L1400.2 380.2L1402.5 378.3L1404.8 376.1L1407.1 373.9L1409.3 371.5L1411.6 369.3L1413.9 367.1L1416.2 365.2L1418.4 363.5L1420.7 362.1L1423.0 361.0L1425.3 360.4L1427.5 360.2L1429.8 360.5L1432.1 361.4L1434.4 362.9L1436.6 364.9L1438.9 367.3L1441.2 369.9L1443.5 372.7L1445.8 375.5L1448.0 378.1L1450.3 380.5L1452.6 382.5L1454.9 384.0L1457.1 384.9L1459.4 385.2L1461.7 385.0L1464.0 384.4L1466.2 383.3L1468.5 382.0L1470.8 380.3L1473.1 378.3L1475.3 376.2L1477.6 373.9L1479.9 371.6L1482.2 369.3L1484.5 367.2L1486.7 365.2L1489.0 363.5L1491.3 362.2L1493.6 361.1L1495.8 360.5L1498.1 360.3L1500.4 360.5L1502.7 361.2L1504.9 362.2L1507.2 363.6L1509.5 365.3L1511.8 367.1L1514.1 369.0L1516.3 370.8L1518.6 372.5L1520.9 373.9L1523.2 374.9L1525.4 375.6L1527.7 375.8L1530.0 375.7L1532.3 375.3L1534.5 374.6L1536.8 373.8L1539.1 372.8L1541.4 371.7L1543.6 370.6L1545.9 369.7L1548.2 368.8L1550.5 368.1L1552.8 367.7L1555.0 367.6L1557.3 367.8L1559.6 368.3L1561.9 369.1L1564.1 370.1L1566.4 371.2L1568.7 372.4L1571.0 373.6L1573.2 374.6L1575.5 375.4" fill="none" stroke="#0000fc" stroke-width="1.95" stroke-linejoin="round"/>
<path d="M148.2 372.1h0M150.4 372.1h0M152.7 372.1h0M155.0 372.1h0M157.3 372.1h0M159.5 372.1h0M161.8 372.1h0M164.1 372.1h0M166.4 372.1h0M168.6 372.1h0M170.9 372.1h0M173.2 372.1h0M175.5 372.1h0M177.7 372.1h0M180.0 372.1h0M182.3 372.1h0M184.6 372.1h0M186.9 372.1h0M189.1 372.1h0M191.4 372.1h0M193.7 372.1h0M196.0 372.1h0M198.2 372.1h0M200.5 372.1h0M202.8 372.1h0M205.1 372.1h0M207.3 372.1h0M209.6 372.1h0M211.9 372.1h0M214.2 372.1h0M216.4 372.1h0M218.7 372.1h0M221.0 372.1h0M223.3 372.1h0M225.6 372.1h0M227.8 372.1h0M230.1 372.1h0M232.4 372.1h0M234.7 372.1h0M236.9 372.1h0M239.2 372.1h0M241.5 372.1h0M243.8 372.1h0M246.0 372.1h0M248.3 372.1h0M250.6 372.1h0M252.9 372.1h0M255.1 372.1h0M257.4 372.1h0M259.7 372.1h0M262.0 372.1h0M264.3 372.1h0M266.5 372.1h0M268.8 372.1h0M271.1 372.1h0M273.4 372.1h0M275.6 372.1h0M277.9 372.1h0M280.2 372.1h0M282.5 372.1h0M284.7 372.1h0M287.0 372.1h0M289.3 372.1h0M291.6 372.1h0M293.8 372.1h0M296.1 372.1h0M298.4 372.1h0M300.7 372.1h0M303.0 372.1h0M305.2 372.1h0M307.5 372.1h0M309.8 372.1h0M312.1 372.1h0M314.3 372.1h0M316.6 372.1h0M318.9 372.1h0M321.2 372.1h0M323.4 372.1h0M325.7 372.1h0M328.0 372.1h0M330.3 372.1h0M332.5 372.1h0M334.8 372.1h0M337.1 372.1h0M339.4 372.1h0M341.7 372.1h0M343.9 372.1h0M346.2 372.1h0M348.5 372.1h0M350.8 372.1h0M353.0 372.1h0M355.3 372.1h0M357.6 372.1h0M359.9 372.1h0M362.1 372.1h0M364.4 372.1h0M366.7 372.1h0M369.0 372.1h0M371.2 372.1h0M373.5 372.1h0M375.8 372.1h0M378.1 372.1h0M380.4 372.1h0M382.6 372.1h0M384.9 372.1h0M387.2 372.1h0M389.5 372.1h0M391.7 372.1h0M394.0 372.1h0M396.3 372.1h0M398.6 372.1h0M400.8 372.1h0M403.1 372.1h0M405.4 372.1h0M407.7 372.1h0M409.9 372.1h0M412.2 372.1h0M414.5 372.1h0M416.8 372.1h0M419.1 372.1h0M421.3 372.1h0M423.6 372.1h0M425.9 372.1h0M428.2 372.1h0M430.4 372.1h0M432.7 372.1h0M435.0 372.1h0M437.3 372.1h0M439.5 372.1h0M441.8 372.1h0M444.1 372.1h0M446.4 372.1h0M448.6 372.1h0M450.9 372.1h0M453.2 372.1h0M455.5 372.1h0M457.8 372.1h0M460.0 372.1h0M462.3 372.1h0M464.6 372.1h0M466.9 372.1h0M469.1 372.1h0M471.4 372.1h0M473.7 372.1h0M476.0 372.1h0M478.2 372.1h0M480.5 372.1h0M482.8 372.1h0M485.1 372.1h0M487.3 372.1h0M489.6 372.1h0M491.9 372.1h0M494.2 372.1h0M496.5 372.1h0M498.7 372.1h0M501.0 372.1h0M503.3 372.1h0M505.6 372.1h0M507.8 371.6h0M510.1 371.6h0M512.4 371.6h0M514.7 371.6h0M516.9 371.6h0M519.2 371.6h0M521.5 371.6h0M523.8 371.6h0M526.0 371.6h0M528.3 370.4h0M530.6 367.9h0M532.9 365.4h0M535.2 362.9h0M537.4 360.5h0M539.7 358.0h0M542.0 355.5h0M544.3 353.0h0M546.5 350.5h0M548.8 348.1h0M551.1 345.6h0M553.4 343.1h0M555.6 343.6h0M557.9 346.1h0M560.2 352.0h0M562.5 358.7h0M564.7 365.8h0M567.0 372.7h0M569.3 381.5h0M571.6 394.2h0M573.9 408.6h0M576.1 422.5h0M578.4 434.1h0M580.7 437.4h0M583.0 434.1h0M585.2 419.9h0M587.5 399.9h0M589.8 379.5h0M592.1 362.2h0M594.3 338.7h0M596.6 311.0h0M598.9 286.6h0M601.2 281.5h0M603.5 302.6h0M605.7 335.0h0M608.0 364.7h0M610.3 390.4h0M612.6 427.4h0M614.8 464.3h0M617.1 478.0h0M619.4 455.8h0M621.7 422.8h0M623.9 370.0h0M626.2 328.6h0M628.5 279.5h0M630.8 256.6h0M633.0 281.3h0M635.3 330.1h0M637.6 371.1h0M639.9 407.9h0M642.2 458.1h0M644.4 484.7h0M646.7 468.4h0M649.0 412.1h0M651.3 370.0h0M653.5 299.8h0M655.8 226.3h0M658.1 248.1h0M660.4 330.1h0M662.6 400.3h0M664.9 473.1h0M667.2 515.1h0M669.5 473.0h0M671.7 397.0h0M674.0 317.0h0M676.3 235.3h0M678.6 225.2h0M680.9 306.0h0M683.1 396.1h0M685.4 489.1h0M687.7 527.6h0M690.0 458.3h0M692.2 360.4h0M694.5 252.7h0M696.8 195.6h0M699.1 277.9h0M701.3 388.0h0M703.6 497.4h0M705.9 538.7h0M708.2 456.1h0M710.4 351.2h0M712.7 243.8h0M715.0 206.0h0M717.3 294.7h0M719.6 404.1h0M721.8 515.3h0M724.1 539.6h0M726.4 429.2h0M728.7 306.0h0M730.9 191.6h0M733.2 232.3h0M735.5 358.9h0M737.8 478.9h0M740.0 550.1h0M742.3 466.2h0M744.6 347.3h0M746.9 220.7h0M749.1 193.8h0M751.4 315.1h0M753.7 444.6h0M756.0 558.5h0M758.3 506.7h0M760.5 363.0h0M762.8 213.8h0M765.1 191.5h0M767.4 340.9h0M769.6 482.6h0M771.9 571.4h0M774.2 448.2h0M776.5 268.4h0M778.7 159.2h0M781.0 288.6h0M783.3 433.8h0M785.6 591.3h0M787.8 475.6h0M790.1 299.4h0M792.4 150.9h0M794.7 258.5h0M797.0 441.3h0M799.2 594.1h0M801.5 465.5h0M803.8 282.5h0M806.1 140.5h0M808.3 301.7h0M810.6 512.0h0M812.9 591.3h0M815.2 388.5h0M817.4 175.5h0M819.7 199.3h0M822.0 411.9h0M824.3 603.6h0M826.5 487.8h0M828.8 264.5h0M831.1 132.7h0M833.4 338.8h0M835.7 570.5h0M837.9 547.7h0M840.2 315.8h0M842.5 124.2h0M844.8 290.8h0M847.0 529.5h0M849.3 586.6h0M851.6 346.2h0M853.9 123.5h0M856.1 274.3h0M858.4 528.4h0M860.7 591.5h0M863.0 335.6h0M865.2 113.8h0M867.5 295.1h0M869.8 553.5h0M872.1 571.2h0M874.4 315.8h0M876.6 113.8h0M878.9 310.8h0M881.2 565.6h0M883.5 556.8h0M885.7 302.4h0M888.0 115.5h0M890.3 321.5h0M892.6 572.2h0M894.8 552.1h0M897.1 303.0h0M899.4 118.6h0M901.7 315.4h0M903.9 557.7h0M906.2 560.7h0M908.5 328.2h0M910.8 124.2h0M913.1 279.6h0M915.3 523.7h0M917.6 592.2h0M919.9 348.1h0M922.2 119.5h0M924.4 278.9h0M926.7 545.9h0M929.0 579.9h0M931.3 303.3h0M933.5 102.3h0M935.8 365.6h0M938.1 638.2h0M940.4 451.2h0M942.6 157.3h0M944.9 201.4h0M947.2 498.3h0M949.5 615.1h0M951.8 335.6h0M954.0 99.3h0M956.3 325.8h0M958.6 611.5h0M960.9 505.5h0M963.1 203.2h0M965.4 155.6h0M967.7 456.1h0M970.0 638.9h0M972.2 362.9h0M974.5 97.6h0M976.8 308.2h0M979.1 600.9h0M981.3 523.9h0M983.6 228.6h0M985.9 137.5h0M988.2 409.2h0M990.5 638.2h0M992.7 437.1h0M995.0 149.9h0M997.3 211.6h0M999.6 512.2h0M1001.8 610.4h0M1004.1 311.8h0M1006.4 93.6h0M1008.7 369.5h0M1010.9 649.7h0M1013.2 431.0h0M1015.5 122.2h0M1017.8 251.9h0M1020.0 569.5h0M1022.3 563.7h0M1024.6 243.7h0M1026.9 125.0h0M1029.2 436.8h0M1031.4 649.5h0M1033.7 374.8h0M1036.0 95.5h0M1038.3 301.8h0M1040.5 617.3h0M1042.8 506.3h0M1045.1 172.1h0M1047.4 183.1h0M1049.6 518.6h0M1051.9 608.6h0M1054.2 290.4h0M1056.5 101.3h0M1058.8 384.6h0M1061.0 648.1h0M1063.3 429.6h0M1065.6 127.1h0M1067.9 244.5h0M1070.1 555.5h0M1072.4 576.0h0M1074.7 269.3h0M1077.0 118.6h0M1079.2 408.8h0M1081.5 645.7h0M1083.8 401.7h0M1086.1 126.1h0M1088.3 254.2h0M1090.6 522.2h0M1092.9 596.6h0M1095.2 345.3h0M1097.5 123.3h0M1099.7 271.3h0M1102.0 507.5h0M1104.3 596.9h0M1106.6 384.6h0M1108.8 170.9h0M1111.1 205.4h0M1113.4 412.1h0M1115.7 590.4h0M1117.9 499.5h0M1120.2 310.8h0M1122.5 156.6h0M1124.8 256.1h0M1127.0 426.5h0M1129.3 571.4h0M1131.6 506.4h0M1133.9 352.1h0M1136.2 204.9h0M1138.4 202.7h0M1140.7 342.2h0M1143.0 475.3h0M1145.3 560.9h0M1147.5 465.9h0M1149.8 343.4h0M1152.1 223.8h0M1154.4 207.0h0M1156.6 315.8h0M1158.9 424.3h0M1161.2 522.9h0M1163.5 519.8h0M1165.7 424.3h0M1168.0 329.5h0M1170.3 237.9h0M1172.6 221.3h0M1174.9 298.9h0M1177.1 384.7h0M1179.4 465.4h0M1181.7 519.1h0M1184.0 481.1h0M1186.2 406.5h0M1188.5 334.9h0M1190.8 265.6h0M1193.1 234.8h0M1195.3 278.5h0M1197.6 343.0h0M1199.9 403.3h0M1202.2 460.6h0M1204.4 497.2h0M1206.7 475.0h0M1209.0 423.8h0M1211.3 371.5h0M1213.6 321.0h0M1215.8 273.7h0M1218.1 256.8h0M1220.4 285.2h0M1222.7 333.0h0M1224.9 377.7h0M1227.2 420.3h0M1229.5 452.2h0M1231.8 473.1h0M1234.0 461.5h0M1236.3 420.6h0M1238.6 385.0h0M1240.9 367.4h0M1243.1 337.9h0M1245.4 303.3h0M1247.7 282.5h0M1250.0 285.1h0M1252.3 307.3h0M1254.5 337.0h0M1256.8 362.5h0M1259.1 382.4h0M1261.4 405.4h0M1263.6 430.3h0M1265.9 445.5h0M1268.2 446.3h0M1270.5 436.2h0M1272.7 417.7h0M1275.0 397.2h0M1277.3 379.6h0M1279.6 365.2h0M1281.8 347.0h0M1284.1 328.2h0M1286.4 314.0h0M1288.7 307.8h0M1291.0 310.2h0M1293.2 317.7h0M1295.5 330.8h0M1297.8 346.3h0M1300.1 360.3h0M1302.3 370.7h0M1304.6 381.0h0M1306.9 392.6h0M1309.2 403.9h0M1311.4 412.1h0M1313.7 416.1h0M1316.0 418.7h0M1318.3 416.1h0M1320.5 412.5h0M1322.8 408.8h0M1325.1 402.9h0M1327.4 394.8h0M1329.7 386.7h0M1331.9 378.6h0M1334.2 372.7h0M1336.5 366.0h0M1338.8 358.9h0M1341.0 351.0h0M1343.3 344.1h0M1345.6 339.2h0M1347.9 337.2h0M1350.1 337.0h0M1352.4 337.4h0M1354.7 338.6h0M1357.0 340.6h0M1359.2 343.3h0M1361.5 346.6h0M1363.8 350.4h0M1366.1 354.5h0M1368.4 358.9h0M1370.6 363.3h0M1372.9 367.7h0M1375.2 371.8h0M1377.5 375.6h0M1379.7 378.9h0M1382.0 381.6h0M1384.3 383.6h0M1386.6 384.8h0M1388.8 385.2h0M1391.1 385.0h0M1393.4 384.4h0M1395.7 383.3h0M1397.9 381.9h0M1400.2 380.2h0M1402.5 378.3h0M1404.8 376.1h0M1407.1 373.9h0M1409.3 371.5h0M1411.6 369.3h0M1413.9 367.1h0M1416.2 365.2h0M1418.4 363.5h0M1420.7 362.1h0M1423.0 361.0h0M1425.3 360.4h0M1427.5 360.2h0M1429.8 360.5h0M1432.1 361.4h0M1434.4 362.9h0M1436.6 364.9h0M1438.9 367.3h0M1441.2 369.9h0M1443.5 372.7h0M1445.8 375.5h0M1448.0 378.1h0M1450.3 380.5h0M1452.6 382.5h0M1454.9 384.0h0M1457.1 384.9h0M1459.4 385.2h0M1461.7 385.0h0M1464.0 384.4h0M1466.2 383.3h0M1468.5 382.0h0M1470.8 380.3h0M1473.1 378.3h0M1475.3 376.2h0M1477.6 373.9h0M1479.9 371.6h0M1482.2 369.3h0M1484.5 367.2h0M1486.7 365.2h0M1489.0 363.5h0M1491.3 362.2h0M1493.6 361.1h0M1495.8 360.5h0M1498.1 360.3h0M1500.4 360.5h0M1502.7 361.2h0M1504.9 362.2h0M1507.2 363.6h0M1509.5 365.3h0M1511.8 367.1h0M1514.1 369.0h0M1516.3 370.8h0M1518.6 372.5h0M1520.9 373.9h0M1523.2 374.9h0M1525.4 375.6h0M1527.7 375.8h0M1530.0 375.7h0M1532.3 375.3h0M1534.5 374.6h0M1536.8 373.8h0M1539.1 372.8h0M1541.4 371.7h0M1543.6 370.6h0M1545.9 369.7h0M1548.2 368.8h0M1550.5 368.1h0M1552.8 367.7h0M1555.0 367.6h0M1557.3 367.8h0M1559.6 368.3h0M1561.9 369.1h0M1564.1 370.1h0M1566.4 371.2h0M1568.7 372.4h0M1571.0 373.6h0M1573.2 374.6h0M1575.5 375.4h0" fill="none" stroke="#0000ff" stroke-width="6.5" stroke-linecap="round"/></g>
<rect x="84.5" y="27.5" width="1490.0" height="688.0" fill="none" stroke="#000" stroke-width="1"/>
<text x="148.2" y="740.2" text-anchor="middle">0.0</text>
<text x="239.2" y="740.2" text-anchor="middle">0.2</text>
<text x="330.2" y="740.2" text-anchor="middle">0.4</text>
<text x="421.2" y="740.2" text-anchor="middle">0.6</text>
<text x="512.2" y="740.2" text-anchor="middle">0.8</text>
<text x="603.2" y="740.2" text-anchor="middle">1.0</text>
<text x="694.2" y="740.2" text-anchor="middle">1.2</text>
<text x="785.2" y="740.2" text-anchor="middle">1.4</text>
<text x="876.2" y="740.2" text-anchor="middle">1.6</text>
<text x="967.2" y="740.2" text-anchor="middle">1.8</text>
<text x="1058.2" y="740.2" text-anchor="middle">2.0</text>
<text x="1149.2" y="740.2" text-anchor="middle">2.2</text>
<text x="1240.2" y="740.2" text-anchor="middle">2.4</text>
<text x="1331.2" y="740.2" text-anchor="middle">2.6</text>
<text x="1422.2" y="740.2" text-anchor="middle">2.8</text>
<text x="1513.2" y="740.2" text-anchor="middle">3.0</text>
<text x="71.8" y="673.5" text-anchor="end">-10</text>
<text x="71.8" y="614.5" text-anchor="end">-8</text>
<text x="71.8" y="555.5" text-anchor="end">-6</text>
<text x="71.8" y="495.5" text-anchor="end">-4</text>
<text x="71.8" y="436.5" text-anchor="end">-2</text>
<text x="71.8" y="377.5" text-anchor="end">0</text>
<text x="71.8" y="317.5" text-anchor="end">2</text>
<text x="71.8" y="258.5" text-anchor="end">4</text>
<text x="71.8" y="199.5" text-anchor="end">6</text>
<text x="71.8" y="139.5" text-anchor="end">8</text>
<text x="71.8" y="80.5" text-anchor="end">10</text>
<text x="829.3" y="761.8" text-anchor="middle">Time (s)</text>
<text transform="translate(33.2 359.5) rotate(-90)" text-anchor="middle">Voltage (V)</text>
<text x="14" y="792">[Graph title here]</text>
<g><path d="M19.8 410.3L36.8 401.8V419Z" fill="#f2d21a" stroke="#a58a12" stroke-width="1" stroke-linejoin="round"/><path d="M26 410.3H32.5" stroke="#222" stroke-width="1.6"/><circle cx="34.3" cy="410.3" r="0.9" fill="#222"/></g>
<g>
<rect x="720.5" y="41.5" width="107" height="59" fill="#fff" stroke="#000" stroke-width="1"/>
<rect x="727.5" y="48.5" width="60" height="23" fill="#fff" stroke="#000" stroke-width="1"/>
<rect x="790.5" y="48.5" width="30" height="23.5" fill="#fff" stroke="#a9a9a9" stroke-width="1"/>
<rect x="727.5" y="75.5" width="61" height="25" fill="#fff" stroke="#a9a9a9" stroke-width="1"/>
<rect x="790.6" y="75.6" width="29.8" height="24.8" fill="#e4e4fc" stroke="#9494aa" stroke-width="1.4"/>
<circle cx="805.6" cy="87.8" r="4.8" fill="#0000ff"/>
<text x="805.3" y="65.3" text-anchor="middle">V</text>
<text x="757.6" y="92.8" text-anchor="middle" style="letter-spacing:1px">Run #1</text>
</g>
<g>
<path d="M1297.5 167.5L1173.8 234.6" stroke="#a9a9f6" stroke-width="1" fill="none"/>
<rect x="1262.5" y="139.1" width="125.1" height="27.3" fill="#fff" stroke="#1414ee" stroke-width="2.4"/>
<text x="1269" y="156.1" style="letter-spacing:0.45px">Area: 0.076 V &#183; s</text>
</g>
</svg></body></html>
